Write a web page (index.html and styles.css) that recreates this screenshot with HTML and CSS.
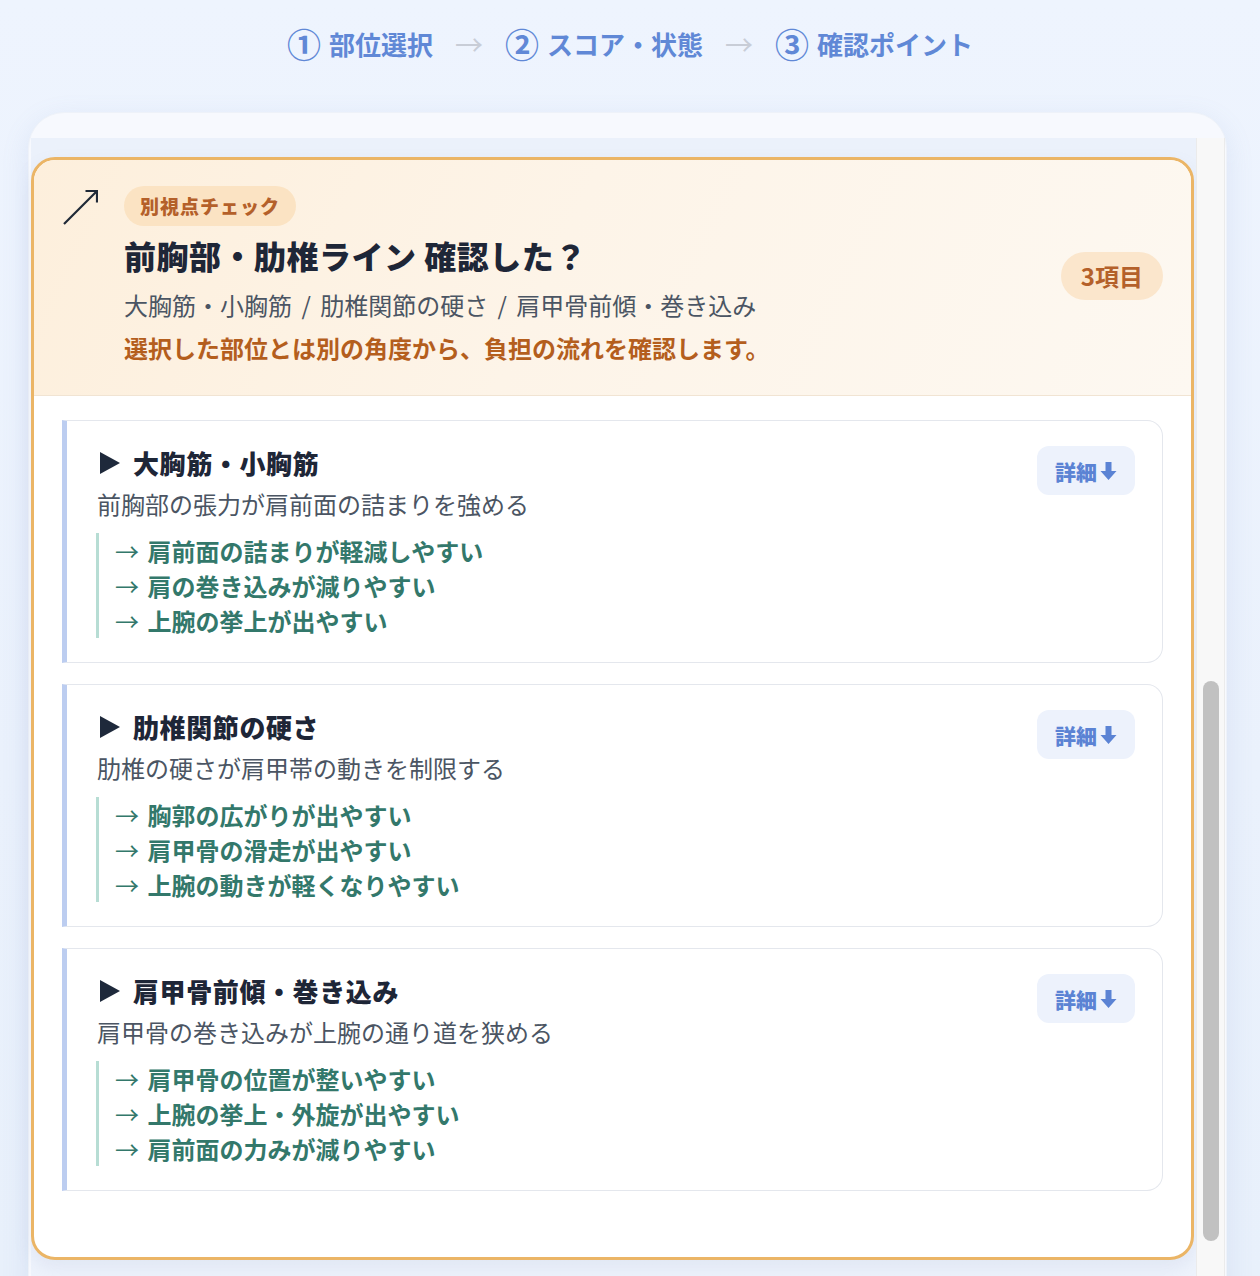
FILE: index.html
```html
<!DOCTYPE html>
<html lang="ja">
<head>
<meta charset="utf-8">
<title>確認ポイント</title>
<link rel="stylesheet" href="styles.css">
</head>
<body>
<nav class="stepper">
  <div class="step"><span class="num">①</span><span>部位選択</span></div>
  <span class="step-arrow">→</span>
  <div class="step"><span class="num">②</span><span>スコア・状態</span></div>
  <span class="step-arrow">→</span>
  <div class="step"><span class="num">③</span><span>確認ポイント</span></div>
</nav>

<section class="panel">
  <div class="viewport">
    <div class="scroll-content">
      <article class="card">
        <header class="card-head">
          <svg class="head-icon" width="36" height="36" viewBox="0 0 36 36" aria-hidden="true">
            <path d="M2 35 L34.5 2.5 M23.5 2 H35 V13.5" fill="none" stroke="#1f2937" stroke-width="2.2" stroke-linecap="butt" stroke-linejoin="miter"/>
          </svg>
          <div class="head-main">
            <span class="badge">別視点チェック</span>
            <h1 class="title">前胸部・肋椎ライン 確認した？</h1>
            <p class="subtitle">大胸筋・小胸筋 / 肋椎関節の硬さ / 肩甲骨前傾・巻き込み</p>
            <p class="note">選択した部位とは別の角度から、負担の流れを確認します。</p>
          </div>
          <span class="count">3項目</span>
        </header>

        <div class="card-body">
          <div class="item">
            <div class="item-main">
              <h2 class="item-title"><svg class="tri" width="20" height="22" viewBox="0 0 20 22" aria-hidden="true"><polygon points="0,0 20,11 0,22" fill="#1e293b"/></svg>大胸筋・小胸筋</h2>
              <p class="item-desc">前胸部の張力が肩前面の詰まりを強める</p>
              <ul class="effects">
                <li><span class="arr">→</span> 肩前面の詰まりが軽減しやすい</li>
                <li><span class="arr">→</span> 肩の巻き込みが減りやすい</li>
                <li><span class="arr">→</span> 上腕の挙上が出やすい</li>
              </ul>
            </div>
            <button class="detail" type="button">詳細<svg width="17" height="20" viewBox="0 0 17 20" aria-hidden="true"><path d="M5.5 1 H11.5 V10 H16.5 L8.5 19 L0.5 10 H5.5 Z" fill="currentColor"/></svg></button>
          </div>

          <div class="item">
            <div class="item-main">
              <h2 class="item-title"><svg class="tri" width="20" height="22" viewBox="0 0 20 22" aria-hidden="true"><polygon points="0,0 20,11 0,22" fill="#1e293b"/></svg>肋椎関節の硬さ</h2>
              <p class="item-desc">肋椎の硬さが肩甲帯の動きを制限する</p>
              <ul class="effects">
                <li><span class="arr">→</span> 胸郭の広がりが出やすい</li>
                <li><span class="arr">→</span> 肩甲骨の滑走が出やすい</li>
                <li><span class="arr">→</span> 上腕の動きが軽くなりやすい</li>
              </ul>
            </div>
            <button class="detail" type="button">詳細<svg width="17" height="20" viewBox="0 0 17 20" aria-hidden="true"><path d="M5.5 1 H11.5 V10 H16.5 L8.5 19 L0.5 10 H5.5 Z" fill="currentColor"/></svg></button>
          </div>

          <div class="item">
            <div class="item-main">
              <h2 class="item-title"><svg class="tri" width="20" height="22" viewBox="0 0 20 22" aria-hidden="true"><polygon points="0,0 20,11 0,22" fill="#1e293b"/></svg>肩甲骨前傾・巻き込み</h2>
              <p class="item-desc">肩甲骨の巻き込みが上腕の通り道を狭める</p>
              <ul class="effects">
                <li><span class="arr">→</span> 肩甲骨の位置が整いやすい</li>
                <li><span class="arr">→</span> 上腕の挙上・外旋が出やすい</li>
                <li><span class="arr">→</span> 肩前面の力みが減りやすい</li>
              </ul>
            </div>
            <button class="detail" type="button">詳細<svg width="17" height="20" viewBox="0 0 17 20" aria-hidden="true"><path d="M5.5 1 H11.5 V10 H16.5 L8.5 19 L0.5 10 H5.5 Z" fill="currentColor"/></svg></button>
          </div>
        </div>
      </article>
    </div>
    <div class="scrollbar" aria-hidden="true"><div class="thumb"></div></div>
  </div>
</section>
</body>
</html>
```

FILE: styles.css
```css
* { box-sizing: border-box; }

html, body {
  margin: 0;
  padding: 0;
}

body {
  height: 1276px;
  overflow: hidden;
  font-family: "Noto Sans CJK JP", "Noto Sans", sans-serif;
  background: linear-gradient(180deg, #eef4fe 0%, #eaf1fc 60%, #e8f0fb 100%);
  color: #1e293b;
}

/* ---------- stepper ---------- */
.stepper {
  display: flex;
  justify-content: center;
  align-items: center;
  gap: 21px;
  padding-top: 23px;
  height: 64px;
  color: #6088d6;
  font-weight: 700;
  font-size: 26px;
  line-height: 40px;
}

.step {
  display: flex;
  align-items: center;
}

.step .num {
  font-size: 34px;
  font-weight: 700;
  margin-right: 8px;
  line-height: 40px;
}

.step-arrow {
  color: #c8cdd7;
  font-weight: 400;
  font-size: 28px;
  width: 30px;
  text-align: center;
}

/* ---------- panel ---------- */
.panel {
  margin: 48px 33px 0 28px;
  height: 1180px;
  border-radius: 36px 36px 0 0;
  background: #f7f9fe;
  padding: 25px 1px 0 2px;
  box-shadow: 0 8px 28px rgba(110, 140, 200, 0.14);
  border: 1px solid #eef2f9;
}

.viewport {
  display: flex;
  height: 100%;
}

.scroll-content {
  flex: 1;
  background: linear-gradient(180deg, #ebf1fb 0%, #eef3fc 100%);
  padding: 19px 2px 0 0;
}

.scrollbar {
  width: 29px;
  background: #f8f8f8;
  border-left: 1px solid #ebebeb;
  border-right: 1px solid #ebebeb;
  padding-top: 543px;
}

.thumb {
  width: 16px;
  height: 560px;
  margin-left: 6px;
  border-radius: 8px;
  background: #c1c1c1;
}

/* ---------- card ---------- */
.card {
  border: 3px solid #ebb566;
  border-radius: 24px;
  background: #ffffff;
  overflow: hidden;
  box-shadow: 0 8px 18px rgba(120, 140, 180, 0.12);
}

.card-head {
  display: flex;
  align-items: flex-start;
  padding: 26px 28px 29px 28px;
  background: linear-gradient(115deg, #fdefdc 0%, #fdf4e8 45%, #fdf8f1 100%);
  border-bottom: 1px solid #f1e4d3;
}

.head-icon {
  flex: none;
  margin-top: 3px;
  margin-right: 26px;
}

.head-main {
  flex: 1;
  display: flex;
  flex-direction: column;
  align-items: flex-start;
}

.badge {
  display: inline-block;
  height: 40px;
  line-height: 40px;
  padding: 0 16px;
  border-radius: 20px;
  background: #fbe3c3;
  color: #b4602a;
  font-size: 19px;
  font-weight: 900;
  letter-spacing: 1px;
}

.title {
  margin: 8px 0 0 0;
  font-size: 32px;
  line-height: 42px;
  font-weight: 800;
  letter-spacing: 0.5px;
  color: #1e2637;
}

.subtitle {
  margin: 11px 0 0 0;
  font-size: 24px;
  line-height: 36px;
  word-spacing: 4px;
  color: #4b5563;
  font-weight: 400;
}

.note {
  margin: 7px 0 0 0;
  font-size: 24px;
  line-height: 36px;
  font-weight: 700;
  color: #b45e1d;
}

.count {
  flex: none;
  align-self: center;
  height: 48px;
  line-height: 48px;
  padding: 0 20px;
  border-radius: 24px;
  background: #fbe6cc;
  color: #b4602a;
  font-size: 24px;
  font-weight: 700;
}

/* ---------- body ---------- */
.card-body {
  display: flex;
  flex-direction: column;
  gap: 21px;
  padding: 24px 28px 66px 28px;
}

.item {
  display: flex;
  align-items: flex-start;
  height: 243px;
  padding: 24px 27px 22px 30px;
  border: 1px solid #e4e7ed;
  border-left: 5px solid #bccdf0;
  border-radius: 0 16px 16px 0;
  background: #ffffff;
}

.item-main {
  flex: 1;
}

.item-title {
  display: flex;
  align-items: center;
  margin: 0;
  font-size: 26px;
  line-height: 36px;
  font-weight: 800;
  letter-spacing: 0.6px;
  color: #1e2637;
}

.tri {
  flex: none;
  margin-left: 3px;
  margin-right: 13px;
}

.item-desc {
  margin: 5px 0 0 0;
  font-size: 24px;
  line-height: 36px;
  color: #4b5563;
}

.effects {
  list-style: none;
  margin: 11px 0 0 -1px;
  padding: 0 0 0 16px;
  border-left: 3px solid #b7ddd4;
}

.effects li {
  font-size: 24px;
  line-height: 35px;
  font-weight: 700;
  color: #33786b;
}

.effects .arr {
  font-weight: 400;
  margin-right: 3px;
}

.detail {
  flex: none;
  display: flex;
  align-items: center;
  gap: 3px;
  height: 49px;
  width: 98px;
  justify-content: center;
  margin-top: 1px;
  border: none;
  border-radius: 12px;
  background: #edf2fc;
  color: #5b83d4;
  font-family: inherit;
  font-size: 21px;
  font-weight: 800;
  padding: 0;
}
```
